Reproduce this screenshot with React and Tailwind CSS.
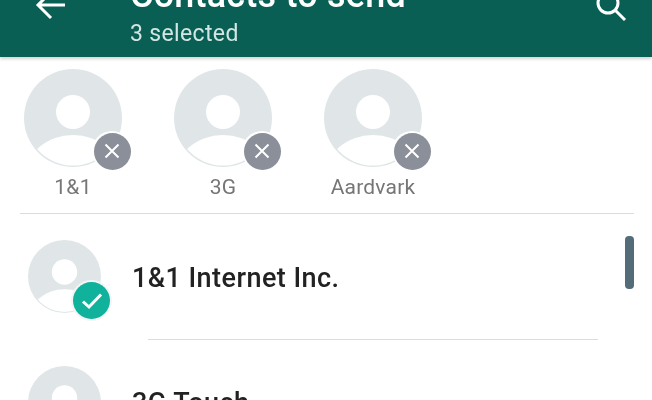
import React from "react";

function Avatar({ size }) {
  const id = "clip" + size;
  return (
    <svg width={size} height={size} viewBox="0 0 98 98" className="block">
      <defs>
        <clipPath id={id}>
          <circle cx="49" cy="49" r="47.5" />
        </clipPath>
      </defs>
      <circle cx="49" cy="49" r="49" fill="#e0e6e8" />
      <circle cx="49" cy="43" r="17" fill="#fff" />
      <ellipse cx="49" cy="108" rx="48" ry="42" fill="#fff" clipPath={`url(#${id})`} />
    </svg>
  );
}

function Chip({ label }) {
  return (
    <div className="w-[98px] flex flex-col items-center">
      <div className="relative w-[98px] h-[98px]">
        <Avatar size={98} />
        <div className="absolute left-[68px] top-[62px] w-[40px] h-[40px] rounded-full bg-white flex items-center justify-center">
          <div className="w-[37px] h-[37px] rounded-full bg-[#8b8f99] flex items-center justify-center">
            <svg width="18" height="18" viewBox="0 0 18 18" fill="none" stroke="#fff" strokeWidth="2">
              <path d="M2.5 2.5 L15.5 15.5 M15.5 2.5 L2.5 15.5" />
            </svg>
          </div>
        </div>
      </div>
      <div className="mt-[7px] text-[21px] leading-[26px] text-[#767676] whitespace-nowrap tracking-[0.2px]">{label}</div>
    </div>
  );
}

export default function App() {
  return (
    <div className="relative w-[652px] h-[400px] overflow-hidden bg-white font-['Roboto',sans-serif] blur-[0.4px]">
      <header className="relative h-[57px] bg-[#0a5f55] shadow-[0_2px_3px_rgba(0,0,0,0.18)] flex items-end overflow-hidden">
        <div className="w-[130px] h-[57px] shrink-0 pl-[35px] flex items-start">
          <svg width="30" height="22" viewBox="0 0 30 22" fill="none" stroke="#fff" strokeWidth="3" className="-mt-[2px]">
            <path d="M30 7 H3 M13 -3 L3 7 L16 20" />
          </svg>
        </div>
        <div className="flex-1 flex flex-col pb-[10px]">
          <div className="mb-[8px] text-[36px] leading-[34px] font-medium text-white whitespace-nowrap tracking-[0.2px]">Contacts to send</div>
          <div className="text-[23px] leading-[27px] text-[#d4e6e3] tracking-[0.35px] whitespace-nowrap">3 selected</div>
        </div>
        <div className="w-[56px] h-[57px] shrink-0 flex items-start">
          <svg width="36" height="24" viewBox="0 0 36 24" fill="none" stroke="#fff" strokeWidth="3">
            <circle cx="12" cy="3" r="10" />
            <path d="M19 10 L29 20" />
          </svg>
        </div>
      </header>

      <div className="flex gap-[52px] pl-[24px] pt-[12px]">
        <Chip label="1&1" />
        <Chip label="3G" />
        <Chip label="Aardvark" />
      </div>

      <div className="mx-[20px] w-[614px] mt-[13px] h-[1px] bg-[#dcdcdc]" />

      <div className="flex pl-[28px] pt-[26px] h-[125px]">
        <div className="relative w-[73px] h-[73px] shrink-0">
          <Avatar size={73} />
          <div className="absolute left-[43px] top-[40px] w-[41px] h-[41px] rounded-full bg-[#f4f6f6] flex items-center justify-center">
            <div className="w-[37px] h-[37px] rounded-full bg-[#10b29b] flex items-center justify-center">
              <svg width="22" height="18" viewBox="0 0 22 18" fill="none" stroke="#fff" strokeWidth="3">
                <path d="M2 9.5 L8 15 L20 2.5" />
              </svg>
            </div>
          </div>
        </div>
        <div className="ml-[31px] mt-[19px] text-[27px] leading-[38px] font-medium text-[#222] whitespace-nowrap tracking-[0.45px]">1&amp;1 Internet Inc.</div>
      </div>

      <div className="ml-[148px] w-[450px] h-[1px] bg-[#dcdcdc]" />

      <div className="flex pl-[28px] pt-[26px]">
        <div className="w-[73px] h-[73px] shrink-0">
          <Avatar size={73} />
        </div>
        <div className="ml-[31px] mt-[18px] text-[27px] leading-[38px] font-medium text-[#222] whitespace-nowrap tracking-[0.45px]">3G Touch</div>
      </div>

      <div className="absolute left-[625px] top-[236px] w-[9px] h-[53px] rounded-[4px] bg-[#546b78]" />
    </div>
  );
}
